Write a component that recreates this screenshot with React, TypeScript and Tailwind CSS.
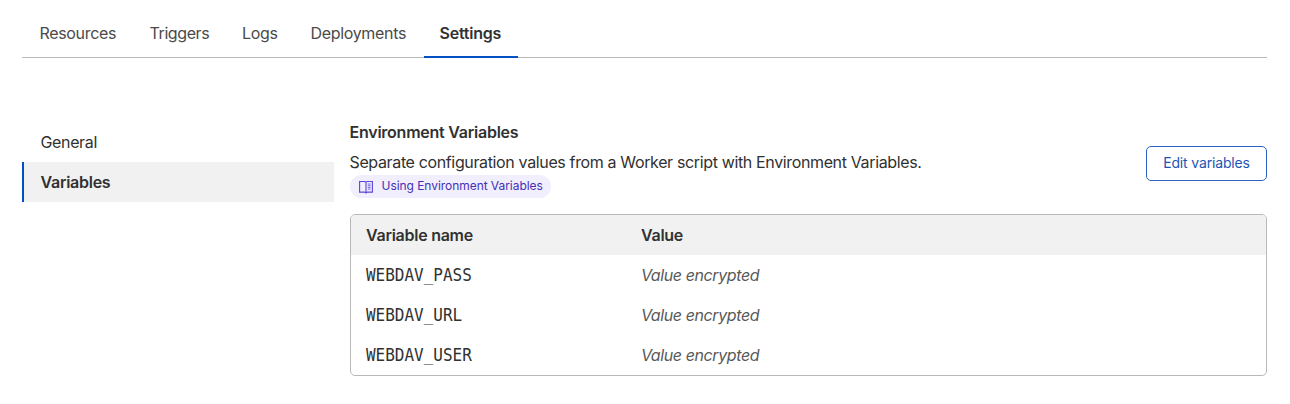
const tabs = [
  { label: 'Resources', cls: 'w-[110px]' },
  { label: 'Triggers', cls: 'w-[92.5px] tracking-[-0.4px]' },
  { label: 'Logs', cls: 'w-[68.5px]' },
  { label: 'Deployments', cls: 'w-[129.5px]' },
];

const variables = ['WEBDAV_PASS', 'WEBDAV_URL', 'WEBDAV_USER'];

function BookIcon() {
  return (
    <svg className="shrink-0" width="14" height="14" viewBox="0 0 14 14" fill="none" stroke="#5746d9" strokeWidth="1.1">
      <path d="M.6 1.5h5.2L7 2.3l1.2-.8h5.2v10.6H8.2L7 13.1l-1.2-1H.6zM7 2.3v10.8" />
      <path d="M8.8 4h2.8M8.8 5.7h2.8M8.8 7.4h2.8M8.8 9.1h2.8" strokeWidth=".8" />
    </svg>
  );
}

export default function App() {
  return (
    <div className="h-[404px] w-[1290px] overflow-hidden bg-white pl-[22px] pr-[23px] pt-[10px] font-['Inter',sans-serif] text-[16px] leading-6 text-[#313131]">
      <nav className="flex h-12 border-b border-[#b9b9b9] pl-[17.5px] tracking-[-0.33px] text-[#4a4a4a]">
        {tabs.map((t) => (
          <a key={t.label} className={`pt-[11px] ${t.cls}`}>{t.label}</a>
        ))}
        <a className="-ml-[16.5px] h-12 w-[94px] border-b-2 border-[#0051c3] pl-4 pt-[11px] font-semibold tracking-[-0.24px] text-[#313131]">
          Settings
        </a>
      </nav>

      <div className="flex">
        <aside className="w-[312px] pt-[64px]">
          <div className="flex h-10 items-center pl-[18.5px] tracking-[-0.36px]">General</div>
          <div className="flex h-10 items-center border-l-2 border-[#0051c3] bg-[#f1f1f1] pl-[16.5px] font-semibold tracking-[-0.26px]">
            Variables
          </div>
        </aside>

        <main className="ml-[15.5px] min-w-0 flex-1 pt-[62px]">
          <div className="flex items-center justify-between">
            <div>
              <h2 className="font-semibold tracking-[-0.24px]">Environment Variables</h2>
              <p className="mt-[6px] h-[25px] tracking-[-0.36px]">Separate configuration values from a Worker script with Environment Variables.</p>
              <a className="flex h-[23px] w-[201px] items-center rounded-full bg-[#f1eefd] pl-[9.5px] text-[12px] text-[#4430b5]">
                <BookIcon />
                <span className="-mt-px ml-[8.5px] whitespace-nowrap tracking-[-0.05px]">Using Environment Variables</span>
              </a>
            </div>
            <button className="mt-[8px] flex h-[35px] w-[121px] items-center justify-center whitespace-nowrap rounded-[5px] border border-[#2864c0] text-[14px] tracking-[-0.15px] text-[#1c55b5]">
              Edit variables
            </button>
          </div>

          <div className="mt-4 h-[162px] overflow-hidden rounded-[5px] border border-[#b9b9b9]">
            <div className="grid h-10 grid-cols-[275px_1fr] items-center bg-[#f1f1f1] pl-[15.5px] font-semibold tracking-[-0.26px]">
              <span>Variable name</span>
              <span>Value</span>
            </div>
            {variables.map((name) => (
              <div key={name} className="grid h-10 grid-cols-[275px_1fr] items-center pl-[15.5px]">
                <span className="origin-left scale-x-[0.94] font-['DejaVu_Sans_Mono',monospace] text-[17px]">{name}</span>
                <span className="italic tracking-[-0.4px] text-[#595959]">Value encrypted</span>
              </div>
            ))}
          </div>
        </main>
      </div>
    </div>
  );
}
